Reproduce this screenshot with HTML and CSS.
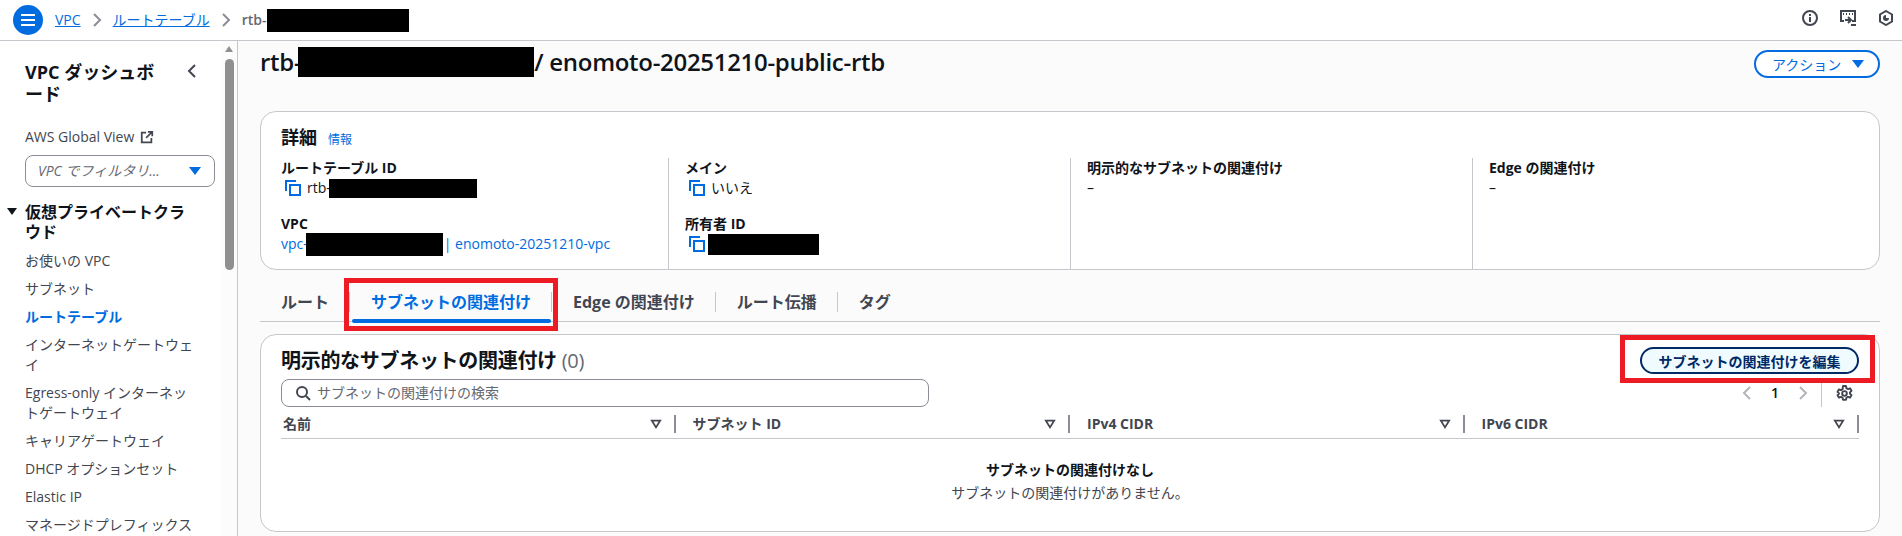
FILE: index.html
```html
<!DOCTYPE html>
<html lang="ja">
<head>
    <meta charset="utf-8">
    <title>VPC ルートテーブル</title>
    <link rel="stylesheet" href="styles.css">
</head>
<body>
    <header class="topbar">
        <button class="menu-btn">
            <svg viewBox="0 0 16 16" width="16" height="16"><path d="M1 3h14M1 8h14M1 13h14" stroke="#fff" stroke-width="2" fill="none"/></svg>
        </button>
        <nav class="crumbs">
            <a href="#">VPC</a>
            <svg class="crumb-sep" viewBox="0 0 16 16" width="16" height="16"><path d="M5 2l6 6-6 6" stroke="#8c8c94" stroke-width="2" fill="none"/></svg>
            <a href="#">ルートテーブル</a>
            <svg class="crumb-sep" viewBox="0 0 16 16" width="16" height="16"><path d="M5 2l6 6-6 6" stroke="#8c8c94" stroke-width="2" fill="none"/></svg>
            <span class="crumb-now">rtb-</span><span class="redact redact-crumb"></span>
        </nav>
        <div class="top-icons">
            <svg viewBox="0 0 16 16" width="16" height="16"><circle cx="8" cy="8" r="7" stroke="#424650" stroke-width="2" fill="none"/><path d="M8 7v5M8 4v2" stroke="#424650" stroke-width="2" fill="none"/></svg>
            <svg viewBox="0 0 16 16" width="16" height="16"><path d="M4 11H1V1h14v10h-3" stroke="#424650" stroke-width="2" fill="none"/><path d="M3 4h1M6 4h1M9 4h1M12 4h1" stroke="#424650" stroke-width="2" fill="none"/><path d="M5 10h5M8 7l3 3-3 3M11 15h5" stroke="#424650" stroke-width="2" fill="none"/></svg>
            <svg viewBox="0 0 16 16" width="16" height="16"><path d="M8 1l6 3.5v7L8 15l-6-3.5v-7z" stroke="#424650" stroke-width="2" fill="none"/><path d="M8 5a3 3 0 1 0 3 3H8z" fill="#424650"/></svg>
        </div>
    </header>

    <div class="layout">
        <aside class="sidenav">
            <div class="side-head">
                <h2>VPC ダッシュボード</h2>
                <svg viewBox="0 0 16 16" width="16" height="16"><path d="M11 2L5 8l6 6" stroke="#424650" stroke-width="2" fill="none"/></svg>
            </div>
            <div class="global-view">
                AWS Global View
                <svg viewBox="0 0 16 16" width="14" height="14"><path d="M7 3H2v11h11V9" stroke="#424650" stroke-width="2" fill="none"/><path d="M9 2h5v5M14 2L7 9" stroke="#424650" stroke-width="2" fill="none"/></svg>
            </div>
            <div class="vpc-filter">
                <span>VPC でフィルタリ...</span>
                <i class="caret"></i>
            </div>
            <h3 class="nav-group"><i class="caret caret-dark"></i>仮想プライベートクラウド</h3>
            <ul class="nav-list">
                <li>お使いの VPC</li>
                <li>サブネット</li>
                <li class="active">ルートテーブル</li>
                <li>インターネットゲートウェイ</li>
                <li>Egress-only インターネッ<br>トゲートウェイ</li>
                <li>キャリアゲートウェイ</li>
                <li>DHCP オプションセット</li>
                <li>Elastic IP</li>
                <li>マネージドプレフィックス</li>
            </ul>
            <div class="scrollbar">
                <i class="scroll-up"></i>
                <i class="scroll-thumb"></i>
            </div>
        </aside>

        <main class="content">
            <div class="page-head">
                <h1>rtb-<span class="redact redact-title"></span>/ enomoto-20251210-public-rtb</h1>
                <button class="btn-action">アクション<i class="caret"></i></button>
            </div>

            <section class="card details">
                <div class="details-title">
                    <h2>詳細</h2>
                    <a href="#">情報</a>
                </div>
                <div class="details-grid">
                    <div class="col">
                        <div class="field">
                            <div class="label">ルートテーブル ID</div>
                            <div class="value">
                                <svg class="copy" viewBox="0 0 16 16" width="16" height="16"><path d="M1 11V1h10" stroke="#006ce0" stroke-width="2" fill="none"/><rect x="5" y="5" width="10" height="10" stroke="#006ce0" stroke-width="2" fill="none"/></svg>
                                rtb-<span class="redact redact-rtb"></span>
                            </div>
                        </div>
                        <div class="field">
                            <div class="label">VPC</div>
                            <div class="value link">vpc-<span class="redact redact-vpc"></span>| enomoto-20251210-vpc</div>
                        </div>
                    </div>
                    <div class="col">
                        <div class="field">
                            <div class="label">メイン</div>
                            <div class="value">
                                <svg class="copy" viewBox="0 0 16 16" width="16" height="16"><path d="M1 11V1h10" stroke="#006ce0" stroke-width="2" fill="none"/><rect x="5" y="5" width="10" height="10" stroke="#006ce0" stroke-width="2" fill="none"/></svg>
                                いいえ
                            </div>
                        </div>
                        <div class="field">
                            <div class="label">所有者 ID</div>
                            <div class="value">
                                <svg class="copy" viewBox="0 0 16 16" width="16" height="16"><path d="M1 11V1h10" stroke="#006ce0" stroke-width="2" fill="none"/><rect x="5" y="5" width="10" height="10" stroke="#006ce0" stroke-width="2" fill="none"/></svg>
                                <span class="redact redact-owner"></span>
                            </div>
                        </div>
                    </div>
                    <div class="col">
                        <div class="field">
                            <div class="label">明示的なサブネットの関連付け</div>
                            <div class="value">–</div>
                        </div>
                    </div>
                    <div class="col">
                        <div class="field">
                            <div class="label">Edge の関連付け</div>
                            <div class="value">–</div>
                        </div>
                    </div>
                </div>
            </section>

            <div class="tabs">
                <div class="tab"><span>ルート</span></div>
                <div class="tab tab-active"><span>サブネットの関連付け</span><i class="mark mark-tab"></i></div>
                <div class="tab"><span>Edge の関連付け</span></div>
                <div class="tab"><span>ルート伝播</span></div>
                <div class="tab tab-last"><span>タグ</span></div>
            </div>

            <section class="card assoc">
                <div class="assoc-head">
                    <h2>明示的なサブネットの関連付け <span class="count">(0)</span></h2>
                    <button class="btn-edit">サブネットの関連付けを編集<i class="mark mark-edit"></i></button>
                </div>
                <div class="tools">
                    <div class="search">
                        <svg viewBox="0 0 16 16" width="16" height="16"><circle cx="7" cy="7" r="5" stroke="#424650" stroke-width="2" fill="none"/><path d="M11 11l4 4" stroke="#424650" stroke-width="2" fill="none"/></svg>
                        <span>サブネットの関連付けの検索</span>
                    </div>
                    <div class="pager">
                        <svg viewBox="0 0 16 16" width="16" height="16"><path d="M11 2L5 8l6 6" stroke="#b4b4bb" stroke-width="2" fill="none"/></svg>
                        <b>1</b>
                        <svg viewBox="0 0 16 16" width="16" height="16"><path d="M5 2l6 6-6 6" stroke="#b4b4bb" stroke-width="2" fill="none"/></svg>
                        <i class="pager-sep"></i>
                        <svg viewBox="0 0 16 16" width="17" height="17"><path d="M6.6 1h2.8l.4 2 1.5.8 1.9-.7 1.4 2.4-1.5 1.4v1.2l1.5 1.4-1.4 2.4-1.9-.7-1.5.8-.4 2H6.6l-.4-2-1.5-.8-1.9.7-1.4-2.4 1.5-1.4V7.9L1.4 6.5l1.4-2.4 1.9.7 1.5-.8z" stroke="#424650" stroke-width="1.8" stroke-linejoin="round" fill="none"/><circle cx="8" cy="8" r="2.2" stroke="#424650" stroke-width="1.8" fill="none"/></svg>
                    </div>
                </div>
                <div class="table-head">
                    <div class="th"><span>名前</span><svg viewBox="0 0 16 16" width="12" height="12"><path d="M2.5 3.5h11L8 12.5z" stroke="#424650" stroke-width="2.4" fill="none"/></svg></div>
                    <div class="th"><span>サブネット ID</span><svg viewBox="0 0 16 16" width="12" height="12"><path d="M2.5 3.5h11L8 12.5z" stroke="#424650" stroke-width="2.4" fill="none"/></svg></div>
                    <div class="th"><span>IPv4 CIDR</span><svg viewBox="0 0 16 16" width="12" height="12"><path d="M2.5 3.5h11L8 12.5z" stroke="#424650" stroke-width="2.4" fill="none"/></svg></div>
                    <div class="th"><span>IPv6 CIDR</span><svg viewBox="0 0 16 16" width="12" height="12"><path d="M2.5 3.5h11L8 12.5z" stroke="#424650" stroke-width="2.4" fill="none"/></svg></div>
                </div>
                <div class="empty">
                    <b>サブネットの関連付けなし</b>
                    <p>サブネットの関連付けがありません。</p>
                </div>
            </section>
        </main>
    </div>
</body>
</html>
```

FILE: styles.css
```css
* {
    box-sizing: border-box;
}

html, body {
    height: 536px;
    overflow: hidden;
}

body {
    margin: 0;
    font-family: "Open Sans", "Noto Sans CJK JP", sans-serif;
    font-size: 14px;
    line-height: 20px;
    color: #0f141a;
    background-color: #fbfbfc;
}

h1, h2, h3, p, ul {
    margin: 0;
    padding: 0;
}

a {
    color: #006ce0;
}

button {
    font-family: inherit;
}

svg {
    display: block;
    flex: none;
}

.redact {
    display: inline-block;
    background-color: #000;
    vertical-align: middle;
}

.caret {
    display: inline-block;
    width: 0;
    height: 0;
    border-left: 6px solid transparent;
    border-right: 6px solid transparent;
    border-top: 8px solid #006ce0;
}

.caret-dark {
    border-top-color: #0f141a;
    border-left-width: 5px;
    border-right-width: 5px;
    border-top-width: 7px;
}

/* Top bar */
.topbar {
    display: flex;
    align-items: center;
    height: 41px;
    padding-left: 13px;
    background-color: #fff;
    border-bottom: 1px solid #c6c6cd;
}

.menu-btn {
    display: flex;
    align-items: center;
    justify-content: center;
    width: 30px;
    height: 30px;
    padding: 0;
    border: none;
    border-radius: 50%;
    background-color: #006ce0;
}

.crumbs {
    display: flex;
    align-items: center;
    margin-left: 12px;
}

.crumb-sep {
    margin: 0 8px;
}

.crumb-now {
    font-weight: 600;
    color: #656871;
}

.redact-crumb {
    width: 142px;
    height: 23px;
}

.top-icons {
    display: flex;
    gap: 22px;
    margin-left: auto;
    margin-right: 8px;
    margin-top: -4px;
}

/* Side nav */
.layout {
    display: flex;
    height: 495px;
}

.sidenav {
    position: relative;
    flex: none;
    width: 238px;
    padding: 20px 0 0 25px;
    background-color: #fff;
    border-right: 1px solid #c6c6cd;
    color: #424650;
}

.side-head {
    display: flex;
    justify-content: space-between;
    width: 175px;
}

.side-head h2 {
    width: 135px;
    font-size: 18px;
    line-height: 22px;
    font-weight: 700;
    color: #0f141a;
}

.side-head svg {
    margin-top: 2px;
}

.global-view {
    display: flex;
    align-items: center;
    gap: 6px;
    margin-top: 22px;
}

.vpc-filter {
    display: flex;
    align-items: center;
    justify-content: space-between;
    width: 190px;
    height: 32px;
    margin-top: 8px;
    padding: 0 13px 0 12px;
    border: 1px solid #8c8c94;
    border-radius: 8px;
    color: #656871;
    font-style: italic;
}

.nav-group {
    position: relative;
    width: 170px;
    margin-top: 15px;
    font-size: 16px;
    line-height: 20px;
    font-weight: 700;
    color: #0f141a;
}

.nav-group .caret {
    position: absolute;
    left: -18px;
    top: 6px;
}

.nav-list {
    width: 178px;
    margin-top: 9px;
    list-style: none;
}

.nav-list li {
    margin-bottom: 8px;
}

.nav-list .active {
    font-weight: 700;
    color: #006ce0;
}

.scrollbar {
    position: absolute;
    top: 0;
    bottom: 0;
    right: 0;
    width: 15px;
    background-color: #fcfcfc;
}

.scroll-up {
    position: absolute;
    left: 3px;
    top: 5px;
    border-left: 4px solid transparent;
    border-right: 4px solid transparent;
    border-bottom: 6px solid #8f8f8f;
}

.scroll-thumb {
    position: absolute;
    left: 3px;
    top: 18px;
    width: 9px;
    height: 211px;
    border-radius: 5px;
    background-color: #8f8f8f;
}

/* Main */
.content {
    flex: 1;
    padding: 0 22px 0 22px;
}

.page-head {
    display: flex;
    justify-content: space-between;
    align-items: flex-start;
    height: 70px;
    padding-top: 6px;
}

.page-head h1 {
    font-size: 24px;
    line-height: 30px;
    font-weight: 600;
    letter-spacing: -0.3px;
}

.redact-title {
    width: 236px;
    height: 30px;
    margin-left: -3px;
    vertical-align: top;
}

.btn-action {
    display: flex;
    align-items: center;
    gap: 11px;
    width: 126px;
    height: 28px;
    margin-top: 3px;
    padding: 0 0 0 16px;
    border: 2px solid #006ce0;
    border-radius: 14px;
    background-color: #fff;
    color: #006ce0;
    font-size: 14px;
}

.card {
    background-color: #fff;
    border: 1px solid #c6c6cd;
    border-radius: 16px;
}

.details {
    height: 159px;
    padding: 13px 20px 15px;
}

.details-title {
    display: flex;
    align-items: baseline;
    gap: 11px;
    height: 24px;
    margin-bottom: 9px;
}

.details-title h2 {
    font-size: 18px;
    line-height: 24px;
    font-weight: 700;
}

.details-title a {
    font-size: 12px;
    text-decoration: none;
}

.details-grid {
    display: grid;
    grid-template-columns: 387px 402px 402px 1fr;
    height: 96px;
}

.col {
    padding-left: 16px;
    border-left: 1px solid #c6c6cd;
}

.col:first-child {
    padding-left: 0;
    border-left: none;
}

.field {
    height: 40px;
    margin-bottom: 16px;
}

.label {
    font-weight: 700;
}

.value {
    display: flex;
    align-items: center;
    height: 20px;
}

.value.link {
    color: #006ce0;
}

.copy {
    margin: 0 6px 0 4px;
}

.redact-rtb {
    width: 148px;
    height: 19px;
    margin-left: -2px;
}

.redact-vpc {
    width: 137px;
    height: 23px;
    margin: 0 1px 0 -2px;
}

.redact-owner {
    width: 111px;
    height: 21px;
    margin-left: -3px;
}

/* Tabs */
.tabs {
    display: flex;
    align-items: center;
    height: 40px;
    margin-top: 12px;
    padding-left: 21px;
    border-bottom: 1px solid #c6c6cd;
}

.tab {
    position: relative;
    padding: 0 20px 0 21px;
    border-right: 1px solid #c6c6cd;
    font-size: 16px;
    font-weight: 700;
    color: #424650;
}

.tab:first-child {
    padding-left: 0;
}

.tab-last {
    border-right: none;
}

.tab-active {
    color: #006ce0;
}

.tab-active::after {
    content: "";
    position: absolute;
    left: 2px;
    right: 0;
    bottom: -11px;
    height: 4px;
    border-radius: 2px;
    background-color: #006ce0;
}

.mark {
    position: absolute;
    border: 5px solid #ed1c24;
}

.mark-tab {
    left: -6px;
    right: -7px;
    top: -14px;
    bottom: -19px;
}

.mark-edit {
    left: -22px;
    right: -18px;
    top: -14px;
    bottom: -11px;
}

/* Associations */
.assoc {
    height: 198px;
    margin-top: 12px;
    padding: 12px 20px 0;
}

.assoc-head {
    display: flex;
    justify-content: space-between;
    align-items: center;
    height: 27px;
}

.assoc-head h2 {
    font-size: 20px;
    line-height: 26px;
    font-weight: 700;
    letter-spacing: -0.3px;
}

.count {
    font-weight: 400;
    color: #656871;
}

.btn-edit {
    position: relative;
    width: 219px;
    height: 27px;
    padding: 0;
    border: 2px solid #002a66;
    border-radius: 14px;
    background-color: #f0fbff;
    color: #002a66;
    font-size: 14px;
    font-weight: 700;
}

.tools {
    display: flex;
    justify-content: space-between;
    align-items: center;
    height: 28px;
    margin-top: 5px;
}

.search {
    display: flex;
    align-items: center;
    gap: 6px;
    width: 648px;
    height: 28px;
    padding-left: 13px;
    border: 1px solid #8c8c94;
    border-radius: 8px;
    color: #656871;
}

.pager {
    display: flex;
    align-items: center;
    height: 28px;
    padding-right: 6px;
}

.pager b {
    width: 40px;
    text-align: center;
    font-weight: 600;
}

.pager-sep {
    width: 1px;
    height: 28px;
    margin: 0 14px 0 10px;
    background-color: #c6c6cd;
}

.table-head {
    display: grid;
    grid-template-columns: repeat(4, 1fr);
    height: 32px;
    border-bottom: 1px solid #c6c6cd;
}

.th {
    position: relative;
    display: flex;
    align-items: center;
    justify-content: space-between;
    padding: 2px 14px 0 17px;
    font-weight: 700;
    color: #424650;
}

.th:first-child {
    padding-left: 2px;
}

.th::after {
    content: "";
    position: absolute;
    right: 0;
    top: 8px;
    width: 2px;
    height: 18px;
    background-color: #8c8c94;
}

.empty {
    margin-top: 21px;
    text-align: center;
}

.empty p {
    margin-top: 3px;
    color: #424650;
}
```
